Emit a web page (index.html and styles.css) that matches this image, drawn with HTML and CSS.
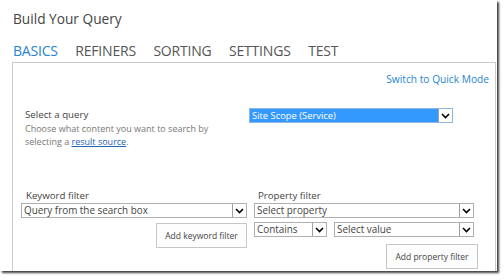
FILE: index.html
```html
<!DOCTYPE html>
<html>
<head>
<meta charset="utf-8">
<link rel="stylesheet" href="styles.css">
</head>
<body>
<div class="frame">
  <div class="title">Build Your Query</div>
  <nav class="tabs">
    <span class="tab active">BASICS</span>
    <span class="tab">REFINERS</span>
    <span class="tab">SORTING</span>
    <span class="tab">SETTINGS</span>
    <span class="tab">TEST</span>
  </nav>
  <div class="panel">
    <div class="switch"><a class="link" href="#">Switch to Quick Mode</a></div>
    <div class="query-row">
      <div class="query-text">
        <div class="label">Select a query</div>
        <div class="desc">Choose what content you want to search by<br>selecting a <a class="ulink" href="#">result source</a>.</div>
      </div>
      <div class="select selected q-select"><span class="val">Site Scope (Service)</span><span class="arrow"><svg width="9" height="6" viewBox="0 0 9 6"><path d="M1 1 L4.5 4.5 L8 1" fill="none" stroke="#000" stroke-width="1.6"/></svg></span></div>
    </div>
    <div class="filters">
      <div class="kw">
        <div class="label">Keyword filter</div>
        <div class="select"><span class="val">Query from the search box</span><span class="arrow"><svg width="9" height="6" viewBox="0 0 9 6"><path d="M1 1 L4.5 4.5 L8 1" fill="none" stroke="#000" stroke-width="1.6"/></svg></span></div>
        <div class="btn-row kw-row"><button class="btn kw-btn">Add keyword filter</button></div>
      </div>
      <div class="pf">
        <div class="label">Property filter</div>
        <div class="select"><span class="val">Select property</span><span class="arrow"><svg width="9" height="6" viewBox="0 0 9 6"><path d="M1 1 L4.5 4.5 L8 1" fill="none" stroke="#000" stroke-width="1.6"/></svg></span></div>
        <div class="pair">
          <div class="select contains"><span class="val">Contains</span><span class="arrow"><svg width="9" height="6" viewBox="0 0 9 6"><path d="M1 1 L4.5 4.5 L8 1" fill="none" stroke="#000" stroke-width="1.6"/></svg></span></div>
          <div class="select value"><span class="val">Select value</span><span class="arrow"><svg width="9" height="6" viewBox="0 0 9 6"><path d="M1 1 L4.5 4.5 L8 1" fill="none" stroke="#000" stroke-width="1.6"/></svg></span></div>
        </div>
        <div class="btn-row pf-row"><button class="btn pf-btn">Add property filter</button></div>
      </div>
    </div>
  </div>
</div>
</body>
</html>
```

FILE: styles.css
```css
html, body {
  margin: 0;
  padding: 0;
  background: #fff;
}
body {
  width: 504px;
  height: 280px;
  overflow: hidden;
  font-family: "Open Sans", "Noto Sans", sans-serif;
  color: #444;
}
.frame {
  width: 497px;
  height: 271px;
  overflow: hidden;
  background: #fff;
  box-shadow: 2px 2px 2px rgba(0,0,0,0.75);
}
.title {
  margin: 10px 0 0 13px;
  font-size: 13.7px;
  line-height: 18px;
  color: #444;
}
.tabs {
  display: flex;
  gap: 17.5px;
  margin: 14px 0 0 13px;
  font-size: 14px;
  line-height: 18px;
  letter-spacing: -0.2px;
}
.tab { color: #555; }
.tab.active { color: #2585d0; }
.panel {
  margin: 2px 0 0 12px;
  width: 482px;
  height: 240px;
  border: 1px solid #cbcbcb;
}
.switch {
  display: flex;
  justify-content: flex-end;
  padding: 9px 6px 0 0;
  font-size: 10.2px;
  line-height: 14px;
}
.link { color: #2585d0; text-decoration: none; }
.ulink { color: #1e64b0; text-decoration: underline; }
.query-row {
  display: flex;
  margin-top: 22px;
}
.query-text {
  width: 224px;
  padding-left: 12px;
}
.label {
  color: #444;
  font-size: 9.7px;
  line-height: 14px;
}
.desc {
  color: #777;
  font-size: 9px;
  line-height: 13px;
}
.select {
  display: flex;
  align-items: center;
  height: 15px;
  box-sizing: border-box;
  border: 1px solid #b0b0b0;
  background: #fff;
  font-size: 9.9px;
  color: #444;
}
.select .val { flex: 1; padding-left: 2px; line-height: 13px; white-space: nowrap; overflow: hidden; }
.select .arrow {
  width: 14px;
  height: 13px;
  box-sizing: border-box;
  border-left: 1px solid #a0a0a0;
  display: flex;
  align-items: center;
  justify-content: center;
  background: #fff;
}
.q-select {
  width: 204px;
  border-color: #8fb6e0;
  font-size: 9.4px;
}
.select.selected .val { background: #3399ff; color: #fff; }
.filters {
  display: flex;
  margin-top: 41px;
  padding-left: 8px;
  gap: 7px;
}
.kw { width: 226px; }
.kw .label { padding-left: 5px; }
.pf { width: 220px; }
.pf .label { padding-left: 4px; }
.pair { display: flex; gap: 7px; margin-top: 4px; }
.contains { width: 73px; }
.value { flex: 1; }
.btn-row { display: flex; justify-content: flex-end; }
.kw-row { margin-top: 5px; }
.pf-row { margin-top: 7px; }
.btn {
  font-family: inherit;
  font-size: 8.5px;
  color: #444;
  background: #fdfdfd;
  border: 1px solid #c6c6c6;
  height: 25px;
  padding: 0;
  margin: 0;
  white-space: nowrap;
}
.kw-btn { width: 91px; }
.pf-btn { width: 92px; margin-right: -4px; }
```
